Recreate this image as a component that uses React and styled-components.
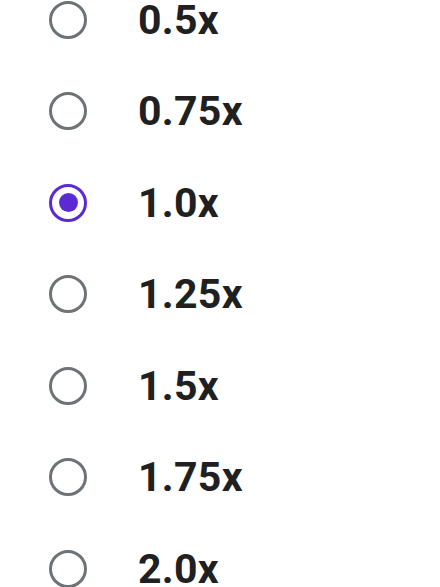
import React, { useState } from 'react';
import styled, { createGlobalStyle } from 'styled-components';

const GlobalStyle = createGlobalStyle`
  html, body {
    margin: 0;
    padding: 0;
    background: #ffffff;
    overflow: hidden;
  }
`;

const SpeedList = styled.ul`
  list-style: none;
  margin: -26px 0 0;
  padding: 0 0 0 49px;
  font-family: Roboto, "Liberation Sans", sans-serif;
`;

const SpeedRow = styled.li`
  display: flex;
  align-items: center;
  height: 91.5px;
  cursor: pointer;
`;

const Radio = styled.span`
  box-sizing: border-box;
  width: 38px;
  height: 38px;
  border-radius: 50%;
  border: 3.5px solid ${(p) => (p.checked ? '#5a2bd4' : '#6e7377')};
  display: flex;
  align-items: center;
  justify-content: center;
  flex-shrink: 0;

  &::after {
    content: '';
    width: 19px;
    height: 19px;
    border-radius: 50%;
    background: #5a2bd4;
    display: ${(p) => (p.checked ? 'block' : 'none')};
  }
`;

const Label = styled.span`
  margin-left: 51px;
  font-size: 41px;
  font-weight: 700;
  color: #202020;
  letter-spacing: 0.3px;
`;

const speeds = ['0.5x', '0.75x', '1.0x', '1.25x', '1.5x', '1.75x', '2.0x'];

export default function App() {
  const [selected, setSelected] = useState('1.0x');
  return (
    <>
      <GlobalStyle />
      <SpeedList>
        {speeds.map((s) => (
          <SpeedRow key={s} onClick={() => setSelected(s)}>
            <Radio checked={selected === s} />
            <Label>{s}</Label>
          </SpeedRow>
        ))}
      </SpeedList>
    </>
  );
}
